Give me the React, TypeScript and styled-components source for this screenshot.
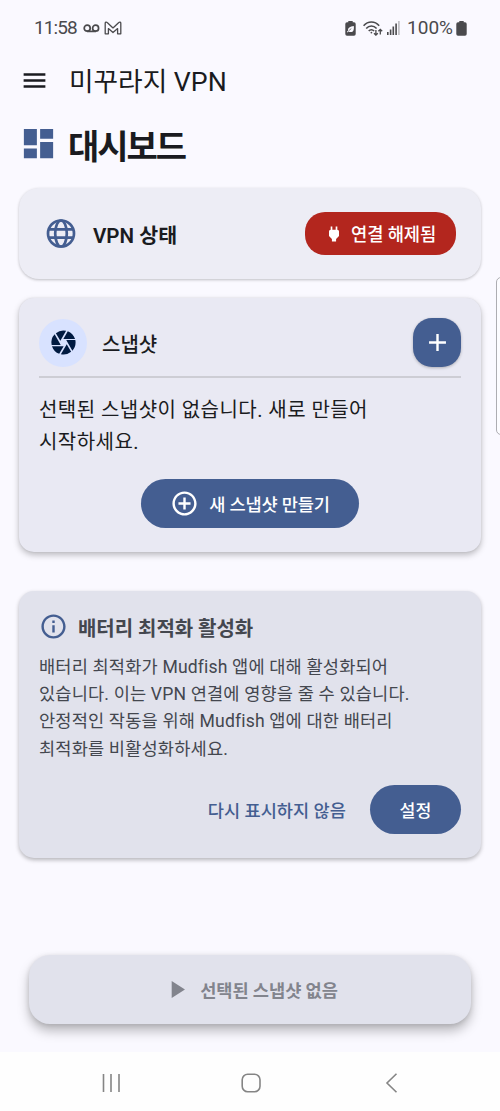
import React from "react";
import styled, { createGlobalStyle } from "styled-components";
import {
  MdMenu, MdDashboard, MdPower, MdCamera, MdAdd,
  MdAddCircleOutline, MdInfoOutline, MdPlayArrow,
} from "react-icons/md";

const Global = createGlobalStyle`
  * { box-sizing: border-box; }
  body { margin: 0; background: #faf9ff; }
  button { font: inherit; border: 0; padding: 0; color: inherit; }
  svg { display: block; flex: none; }
`;

const Screen = styled.div`
  width: 500px;
  height: 1111px;
  display: flex;
  flex-direction: column;
  position: relative;
  overflow: hidden;
  background: #faf9ff;
  color: #1a1b20;
  font-family: Roboto, "Noto Sans CJK KR", sans-serif;
`;

const StatusBar = styled.header`
  height: 56px;
  padding: 0 33px 0 34px;
  display: flex;
  align-items: center;
  color: #4a4a4d;
`;

const StatusText = styled.span<{ $spacing: number }>`
  font-size: 19px;
  line-height: 22px;
  letter-spacing: ${(p) => p.$spacing}px;
`;

const StatusGroup = styled.div<{ $end?: boolean }>`
  display: flex;
  align-items: center;
  margin-left: ${(p) => (p.$end ? "auto" : "0")};
`;

const Gap = styled.i<{ $w: number }>`
  width: ${(p) => p.$w}px;
  flex: none;
`;

const Label = styled.span<{ $size: number; $weight?: number; $spacing?: number; $drop?: number }>`
  font-size: ${(p) => p.$size}px;
  font-weight: ${(p) => p.$weight ?? 400};
  letter-spacing: ${(p) => p.$spacing ?? 0}px;
  padding-top: ${(p) => (p.$drop ?? 0) * 2}px;
  line-height: 1.4;
  white-space: nowrap;
`;

const AppBar = styled.div`
  height: 48px;
  padding-left: 20px;
  display: flex;
  align-items: center;
  gap: 20px;
`;

const PageHeading = styled.h1`
  margin: 10px 0 0;
  height: 62px;
  padding-left: 19px;
  display: flex;
  align-items: center;
  gap: 10px;
  font-weight: 400;
  svg { color: #445e91; margin-top: -3px; }
`;

const Card = styled.section<{ $bg: string; $radius: number; $shadow: string }>`
  margin: 0 19px;
  background: ${(p) => p.$bg};
  border-radius: ${(p) => p.$radius}px;
  box-shadow: ${(p) => p.$shadow};
`;

const StatusCard = styled(Card)`
  margin-top: 12px;
  height: 91px;
  padding: 0 25px 0 25px;
  display: flex;
  align-items: center;
  > svg { margin-right: 14px; }
`;

const StateChip = styled.div`
  margin-left: auto;
  width: 151px;
  height: 43px;
  padding-left: 19px;
  border-radius: 20px;
  background: #b3261e;
  color: #fff;
  display: flex;
  align-items: center;
  gap: 7px;
`;

const SnapshotCard = styled(Card)`
  margin-top: 19px;
  height: 254px;
  padding: 20px;
  display: flex;
  flex-direction: column;
`;

const SnapshotHeader = styled.div`
  height: 60px;
  padding-bottom: 9px;
  border-bottom: 2px solid #cdcdd4;
  display: flex;
  align-items: center;
  gap: 15px;
`;

const Avatar = styled.div`
  width: 48px;
  height: 48px;
  border-radius: 50%;
  background: #d8e2ff;
  color: #001a41;
  display: grid;
  place-items: center;
`;

const AddButton = styled.button`
  margin-left: auto;
  width: 48px;
  height: 49px;
  border-radius: 19px;
  background: #445e91;
  color: #fff;
  display: grid;
  place-items: center;
  box-shadow: 0 1px 3px rgba(0, 0, 0, 0.25);
`;

const Paragraph = styled.p<{ $size: number; $line: number; $spacing: number }>`
  margin: 0;
  font-size: ${(p) => p.$size}px;
  line-height: ${(p) => p.$line}px;
  letter-spacing: ${(p) => p.$spacing}px;
  white-space: nowrap;
`;

const SnapshotText = styled(Paragraph)`
  margin-top: 16px;
`;

const PillButton = styled.button<{ $w: number }>`
  width: ${(p) => p.$w}px;
  height: 49px;
  border-radius: 25px;
  background: #445e91;
  color: #fff;
  display: flex;
  align-items: center;
  justify-content: center;
  gap: 10px;
`;

const CreateButton = styled(PillButton)`
  margin: 21px auto 0;
`;

const BatteryCard = styled(Card)`
  margin-top: 39px;
  height: 267px;
  padding: 20px;
  color: #44474f;
  display: flex;
  flex-direction: column;
`;

const BatteryHeader = styled.div`
  height: 31px;
  display: flex;
  align-items: center;
  gap: 10px;
  svg { color: #445e91; }
`;

const BatteryText = styled(Paragraph)`
  margin-top: 12px;
`;

const Actions = styled.div`
  margin-top: auto;
  margin-bottom: 4px;
  display: flex;
  align-items: center;
  justify-content: flex-end;
  gap: 24px;
`;

const TextButton = styled.button`
  background: none;
  color: #445e91;
  display: flex;
`;

const StartButton = styled.button`
  margin: auto 29px 28px;
  height: 69px;
  border-radius: 21px;
  background: #e1e2ec;
  color: #82848d;
  display: flex;
  align-items: center;
  justify-content: center;
  gap: 9px;
  box-shadow: 0 7px 12px rgba(0, 0, 0, 0.26), 0 1px 5px rgba(0, 0, 0, 0.12);
`;

const NavBar = styled.nav`
  height: 59px;
  background: #fefefe;
  padding: 3px 80px 0 82px;
  display: flex;
  align-items: center;
  justify-content: space-between;
`;

const EdgeHandle = styled.div`
  position: absolute;
  left: 496px;
  top: 277px;
  width: 12px;
  height: 158px;
  border: 1px solid #adadb2;
  border-radius: 5px;
  background: #fcfcff;
`;

const Voicemail = () => (
  <svg width="17" height="9" viewBox="0 0 17 9" fill="none" stroke="#4a4a4d" strokeWidth="1.7">
    <circle cx="4.2" cy="4.2" r="3" />
    <circle cx="12.6" cy="4.2" r="3" />
    <path d="M4 7.4h9" />
  </svg>
);

const Mail = () => (
  <svg width="18" height="14" viewBox="0 0 18 14" fill="none" stroke="#4a4a4d" strokeWidth="1.3" strokeLinejoin="round">
    <path d="M1.2 12.8V2.2C1.2 1 2.4.7 3.2 1.5L9 6.9l5.8-5.4C15.6.7 16.8 1 16.8 2.2v10.6h-3.2V7.6L9 11.6 4.4 7.6v5.2z" />
  </svg>
);

const BatterySaver = () => (
  <svg width="11" height="15" viewBox="0 0 11 15">
    <path fill="#4a4a4d" d="M3.3 0h4.4v1.3H9A1.7 1.7 0 0 1 10.7 3v10A1.7 1.7 0 0 1 9 14.7H2A1.7 1.7 0 0 1 .3 13V3A1.7 1.7 0 0 1 2 1.3h1.3z" />
    <path fill="#faf9ff" d="M8.8 4.9c.4 3.6-.3 6.2-3.1 6.2-.9 0-1.6-.3-2-.6l-1.4.9-.4-.7 1.1-1C2.8 6.5 5 5.5 8.8 4.9z" />
    <path d="M3.5 9.9 6.3 7.6" stroke="#4a4a4d" strokeWidth=".7" />
  </svg>
);

const Wifi = () => (
  <svg width="20" height="15" viewBox="0 0 20 15" fill="none" stroke="#4a4a4d" strokeWidth="1.6">
    <path d="M.6 4.7C5-.2 11.8-.2 16.2 4.7M3.2 7.5c3-3.3 7.4-3.3 10.4 0M5.7 10c1.6-1.7 3.8-1.7 5.4 0" />
    <circle cx="8.4" cy="11.6" r=".9" fill="#4a4a4d" stroke="none" />
    <path strokeWidth="1.3" d="M12.9 9v5M11 12.2l1.9 1.9 1.9-1.9M17.3 13.5v-5M15.4 10.3l1.9-1.9 1.9 1.9" />
  </svg>
);

const Signal = () => (
  <svg width="13" height="14" viewBox="0 0 13 14" fill="#4a4a4d">
    <path d="M0 11h1.6v3H0zM2.8 8.5h1.6V14H2.8zM5.5 5.5h1.6V14H5.5zM8.3 2.5h1.6V14H8.3z" />
    <path d="M11.2 0h1.4v14h-1.4z" opacity=".4" />
  </svg>
);

const Battery = () => (
  <svg width="11" height="15" viewBox="0 0 11 15" fill="#4a4a4d">
    <path d="M3.3 0h4.4v1.3H9A1.7 1.7 0 0 1 10.7 3v10A1.7 1.7 0 0 1 9 14.7H2A1.7 1.7 0 0 1 .3 13V3A1.7 1.7 0 0 1 2 1.3h1.3z" />
  </svg>
);

const Globe = () => (
  <svg width="35" height="35" viewBox="0 0 35 35" fill="none" stroke="#445e91" strokeWidth="2.7">
    <circle cx="17" cy="17.5" r="13" />
    <ellipse cx="17" cy="17.5" rx="5.8" ry="13" />
    <path d="M4.5 13.4h25M4.5 21.6h25" />
  </svg>
);

const Recents = () => (
  <svg width="58" height="20" viewBox="0 0 58 20" stroke="#858585" strokeWidth="1.6">
    <path d="M21.5 1v18M29 1v18M37 1v18" />
  </svg>
);

const Home = () => (
  <svg width="58" height="20" viewBox="0 0 58 20" fill="none" stroke="#858585" strokeWidth="1.6">
    <rect x="20.2" y="1.2" width="17.8" height="17.6" rx="5.5" />
  </svg>
);

const Back = () => (
  <svg width="58" height="20" viewBox="0 0 58 20" fill="none" stroke="#858585" strokeWidth="1.6">
    <path d="M34.5.7 25 10l9.5 9.3" />
  </svg>
);

export default function App() {
  return (
    <Screen>
      <Global />
      <StatusBar>
        <StatusGroup>
          <StatusText $spacing={-0.9}>11:58</StatusText>
          <Gap $w={6} />
          <Voicemail />
          <Gap $w={4} />
          <Mail />
        </StatusGroup>
        <StatusGroup $end>
          <BatterySaver />
          <Gap $w={7} />
          <Wifi />
          <Gap $w={4} />
          <Signal />
          <Gap $w={7} />
          <StatusText $spacing={0}>100%</StatusText>
          <Gap $w={3} />
          <Battery />
        </StatusGroup>
      </StatusBar>

      <AppBar>
        <MdMenu size={29} />
        <Label $size={26.7} $drop={3}>미꾸라지 VPN</Label>
      </AppBar>

      <PageHeading>
        <MdDashboard size={39} />
        <Label $size={34} $weight={700} $spacing={-2} $drop={3}>대시보드</Label>
      </PageHeading>

      <StatusCard $bg="#ededf5" $radius={20} $shadow="0 1px 3px rgba(0,0,0,.24)">
        <Globe />
        <Label $size={20.6} $weight={600} $drop={3}>VPN 상태</Label>
        <StateChip>
          <MdPower size={20} />
          <Label $size={17.7} $weight={500} $spacing={-0.1} $drop={2}>연결 해제됨</Label>
        </StateChip>
      </StatusCard>

      <SnapshotCard $bg="#e9e9f3" $radius={15} $shadow="0 3px 6px rgba(0,0,0,.25), 0 0 2px rgba(0,0,0,.1)">
        <SnapshotHeader>
          <Avatar><MdCamera size={29} /></Avatar>
          <Label $size={20} $weight={500} $drop={2}>스냅샷</Label>
          <AddButton aria-label="추가"><MdAdd size={29} /></AddButton>
        </SnapshotHeader>
        <SnapshotText $size={20} $line={32} $spacing={0.45}>
          선택된 스냅샷이 없습니다. 새로 만들어<br />시작하세요.
        </SnapshotText>
        <CreateButton $w={218}>
          <MdAddCircleOutline size={29} />
          <Label $size={17.6} $weight={500} $spacing={-0.15} $drop={1.5}>새 스냅샷 만들기</Label>
        </CreateButton>
      </SnapshotCard>

      <BatteryCard $bg="#e1e2ec" $radius={15} $shadow="0 2px 4px rgba(0,0,0,.28)">
        <BatteryHeader>
          <MdInfoOutline size={29} />
          <Label $size={20} $weight={700} $spacing={-0.03} $drop={2}>배터리 최적화 활성화</Label>
        </BatteryHeader>
        <BatteryText $size={17.6} $line={27.2} $spacing={0.15}>
          배터리 최적화가 Mudfish 앱에 대해 활성화되어<br />
          있습니다. 이는 VPN 연결에 영향을 줄 수 있습니다.<br />
          안정적인 작동을 위해 Mudfish 앱에 대한 배터리<br />
          최적화를 비활성화하세요.
        </BatteryText>
        <Actions>
          <TextButton><Label $size={17.6} $weight={500} $drop={1.5}>다시 표시하지 않음</Label></TextButton>
          <PillButton $w={91}><Label $size={17.3} $weight={500} $drop={1.5}>설정</Label></PillButton>
        </Actions>
      </BatteryCard>

      <StartButton>
        <MdPlayArrow size={29} />
        <Label $size={17.6} $weight={700} $spacing={-0.05} $drop={1.5}>선택된 스냅샷 없음</Label>
      </StartButton>

      <NavBar>
        <Recents />
        <Home />
        <Back />
      </NavBar>
      <EdgeHandle />
    </Screen>
  );
}
